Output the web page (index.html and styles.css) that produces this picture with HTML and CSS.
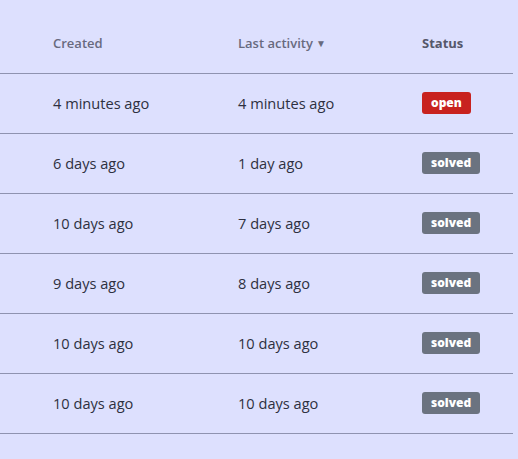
FILE: index.html
```html
<!DOCTYPE html>
<html>
<head>
<meta charset="utf-8">
<link rel="stylesheet" href="styles.css">
</head>
<body>
<div class="table">
  <div class="row head">
    <div class="cell">Created</div>
    <div class="cell">Last activity <span class="caret">▼</span></div>
    <div class="cell">Status</div>
  </div>
  <div class="row">
    <div class="cell">4 minutes ago</div>
    <div class="cell">4 minutes ago</div>
    <div class="cell"><span class="badge open">open</span></div>
  </div>
  <div class="row">
    <div class="cell">6 days ago</div>
    <div class="cell">1 day ago</div>
    <div class="cell"><span class="badge solved">solved</span></div>
  </div>
  <div class="row">
    <div class="cell">10 days ago</div>
    <div class="cell">7 days ago</div>
    <div class="cell"><span class="badge solved">solved</span></div>
  </div>
  <div class="row">
    <div class="cell">9 days ago</div>
    <div class="cell">8 days ago</div>
    <div class="cell"><span class="badge solved">solved</span></div>
  </div>
  <div class="row">
    <div class="cell">10 days ago</div>
    <div class="cell">10 days ago</div>
    <div class="cell"><span class="badge solved">solved</span></div>
  </div>
  <div class="row">
    <div class="cell">10 days ago</div>
    <div class="cell">10 days ago</div>
    <div class="cell"><span class="badge solved">solved</span></div>
  </div>
</div>
</body>
</html>
```
FILE: styles.css
```css
html, body {
  margin: 0;
  padding: 0;
  background: #dde0fe;
}
body {
  font-family: "Open Sans", "Noto Sans", sans-serif;
  color: #2e3040;
  height: 459px;
  overflow: hidden;
}
.table {
  width: 513px;
}
.row {
  display: grid;
  grid-template-columns: 185px 184px 1fr;
  padding-left: 53px;
  height: 59px;
  align-items: center;
  border-bottom: 1px solid #8f93b0;
  font-size: 14.6px;
}
.cell {
  display: flex;
  align-items: center;
  line-height: 20px;
  margin-top: -2px;
}
.row.head {
  height: 74px;
  align-items: start;
  box-sizing: border-box;
  padding-top: 33px;
  font-size: 13px;
  font-weight: 600;
  color: #686a7e;
}
.head .cell {
  margin-top: 0;
}
.head .cell:last-child {
  color: #55576a;
  font-weight: 700;
}
.caret {
  font-size: 10px;
  margin-left: 3px;
}
.badge {
  display: inline-block;
  height: 22px;
  line-height: 22px;
  padding: 0 9px;
  border-radius: 3px;
  color: #fff;
  font-size: 12px;
  font-weight: 800;
}
.badge.open {
  background: #c8221f;
}
.badge.solved {
  background: #6b7380;
}
```
